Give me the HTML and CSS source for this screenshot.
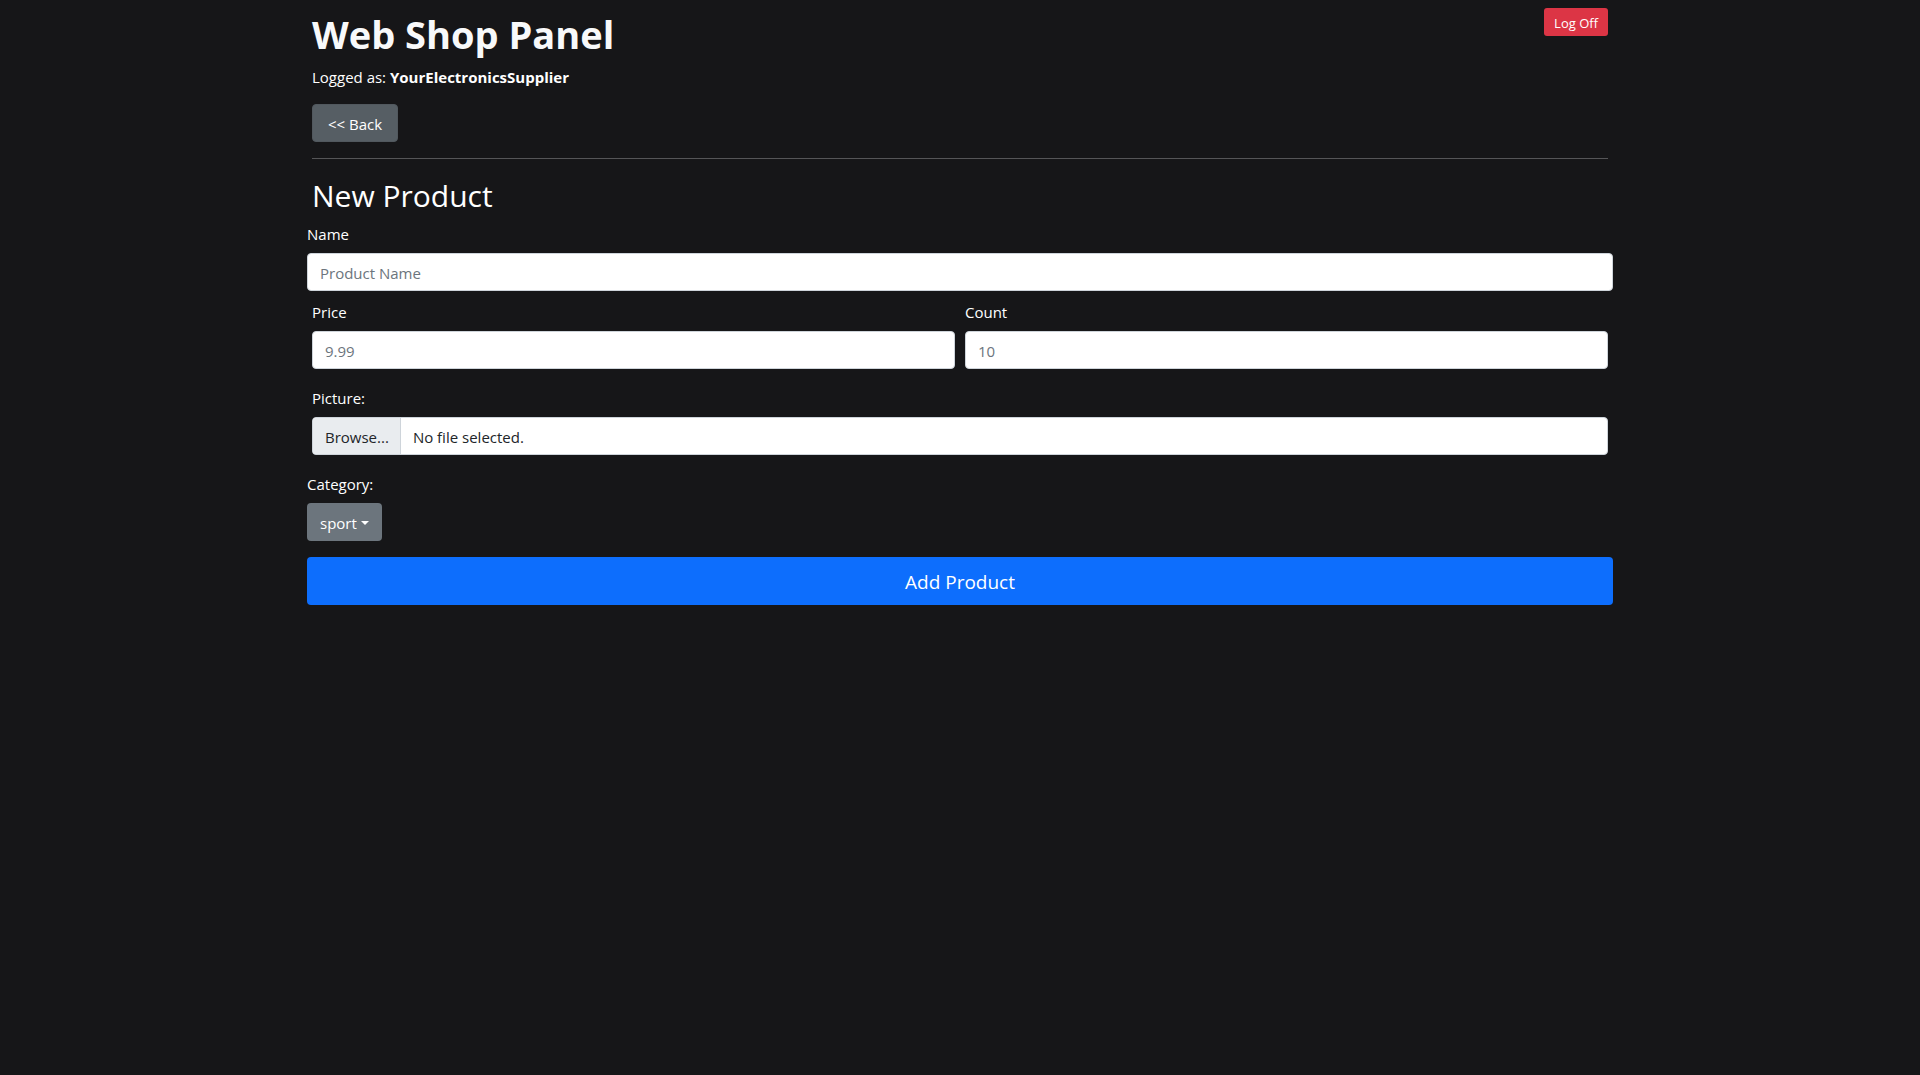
FILE: index.html
```html
<!DOCTYPE html>
<html lang="en">
<head>
  <meta charset="utf-8">
  <meta name="viewport" content="width=device-width, initial-scale=1">
  <title>Web Shop Panel</title>
  <link rel="stylesheet" href="styles.css">
</head>
<body>
  <div class="container">
    <header class="header">
      <div class="header-top">
        <h1 class="title">Web Shop Panel</h1>
        <button type="button" class="btn btn-danger">Log Off</button>
      </div>
      <p class="user">Logged as: <strong>YourElectronicsSupplier</strong></p>
      <button type="button" class="btn btn-back">&lt;&lt; Back</button>
    </header>
    <main>
      <h2 class="subtitle">New Product</h2>
      <form class="form">
        <div class="field field-name">
          <label for="name">Name</label>
          <input class="control" type="text" id="name" placeholder="Product Name">
        </div>
        <div class="row">
          <div class="field">
            <label for="price">Price</label>
            <input class="control" type="text" inputmode="decimal" id="price" placeholder="9.99">
          </div>
          <div class="field">
            <label for="count">Count</label>
            <input class="control" type="text" inputmode="numeric" id="count" placeholder="10">
          </div>
        </div>
        <div class="row">
          <div class="field">
            <label for="picture">Picture:</label>
            <div class="control file">
              <span class="file-button" aria-hidden="true">Browse...</span>
              <span class="file-name" aria-hidden="true">No file selected.</span>
              <input class="file-input" type="file" id="picture">
            </div>
          </div>
        </div>
        <div class="field">
          <label for="category">Category:</label>
          <div class="dropdown">
            <select class="btn btn-select" id="category">
              <option>sport</option>
            </select>
          </div>
        </div>
        <button type="submit" class="btn btn-primary">Add Product</button>
      </form>
    </main>
  </div>
</body>
</html>
```
FILE: styles.css
```css
*,
*::before,
*::after {
  box-sizing: border-box;
}

body {
  margin: 0;
  background: #161618;
  color: #fff;
  font: 15px/24px "Segoe UI", "Open Sans", "Noto Sans", sans-serif;
}

.container {
  max-width: 1320px;
  margin: 0 auto;
  padding: 8px 12px;
}

.header {
  padding-bottom: 16px;
  border-bottom: 1px solid #555557;
  margin-bottom: 16px;
}

.header-top {
  display: flex;
  justify-content: space-between;
  align-items: flex-start;
  margin-bottom: 4px;
}

.title {
  margin: 0;
  color: #f8f9fa;
  font-size: 38px;
  line-height: 52px;
  font-weight: 700;
}

.user {
  margin: 0 0 14px;
  line-height: 26px;
}

.user strong {
  font-weight: 700;
}

.subtitle {
  margin: 0 0 4px;
  font-size: 30px;
  line-height: 42px;
  font-weight: 400;
}

.btn {
  display: block;
  padding: 7px 12px 5px;
  border: 1px solid transparent;
  border-radius: 4px;
  color: #fff;
  font: inherit;
  cursor: pointer;
}

.btn-danger {
  padding: 3px 9px 1px;
  border-radius: 3px;
  background: #dc3545;
  font-size: 13px;
  line-height: 22px;
}

.btn-back {
  padding-right: 15px;
  padding-left: 15px;
  border-color: #51585e;
  background: #565e64;
}

.form {
  display: flex;
  flex-direction: column;
  gap: 16px;
  margin: 0 -5px;
}

.row {
  display: flex;
  gap: 10px;
  padding: 0 5px;
}

.field {
  display: flex;
  flex: 1;
  flex-direction: column;
  align-items: flex-start;
  gap: 6px;
  line-height: 26px;
}

.field-name {
  margin-bottom: -8px;
}

.control {
  width: 100%;
  height: 38px;
  padding: 7px 12px 5px;
  border: 1px solid #ced4da;
  border-radius: 4px;
  background: #fff;
  color: #212529;
  font: inherit;
  line-height: 24px;
}

.control::placeholder {
  color: #6c757d;
  opacity: 1;
}

.file {
  position: relative;
  display: flex;
  padding: 0;
  overflow: hidden;
}

.file-button {
  padding: 7px 11px 5px 12px;
  border-right: 1px solid #ced4da;
  background: #e9ecef;
}

.file-name {
  padding: 7px 12px 5px;
}

.file-input {
  position: absolute;
  inset: 0;
  width: 100%;
  opacity: 0;
  cursor: pointer;
}

.dropdown {
  display: grid;
  align-items: center;
}

.dropdown > .btn-select,
.dropdown::after {
  grid-area: 1 / 1;
}

.dropdown::after {
  content: "";
  justify-self: end;
  margin-top: 2px;
  margin-right: 13px;
  border: 4px solid transparent;
  border-top-color: #fff;
  border-bottom: 0;
  pointer-events: none;
}

.btn-select {
  appearance: none;
  height: 38px;
  padding-right: 24px;
  background: #6c757d;
  line-height: 24px;
}

.btn-primary {
  padding: 9px 16px 7px;
  background: #0d6efd;
  font-size: 19px;
  line-height: 30px;
}
```
